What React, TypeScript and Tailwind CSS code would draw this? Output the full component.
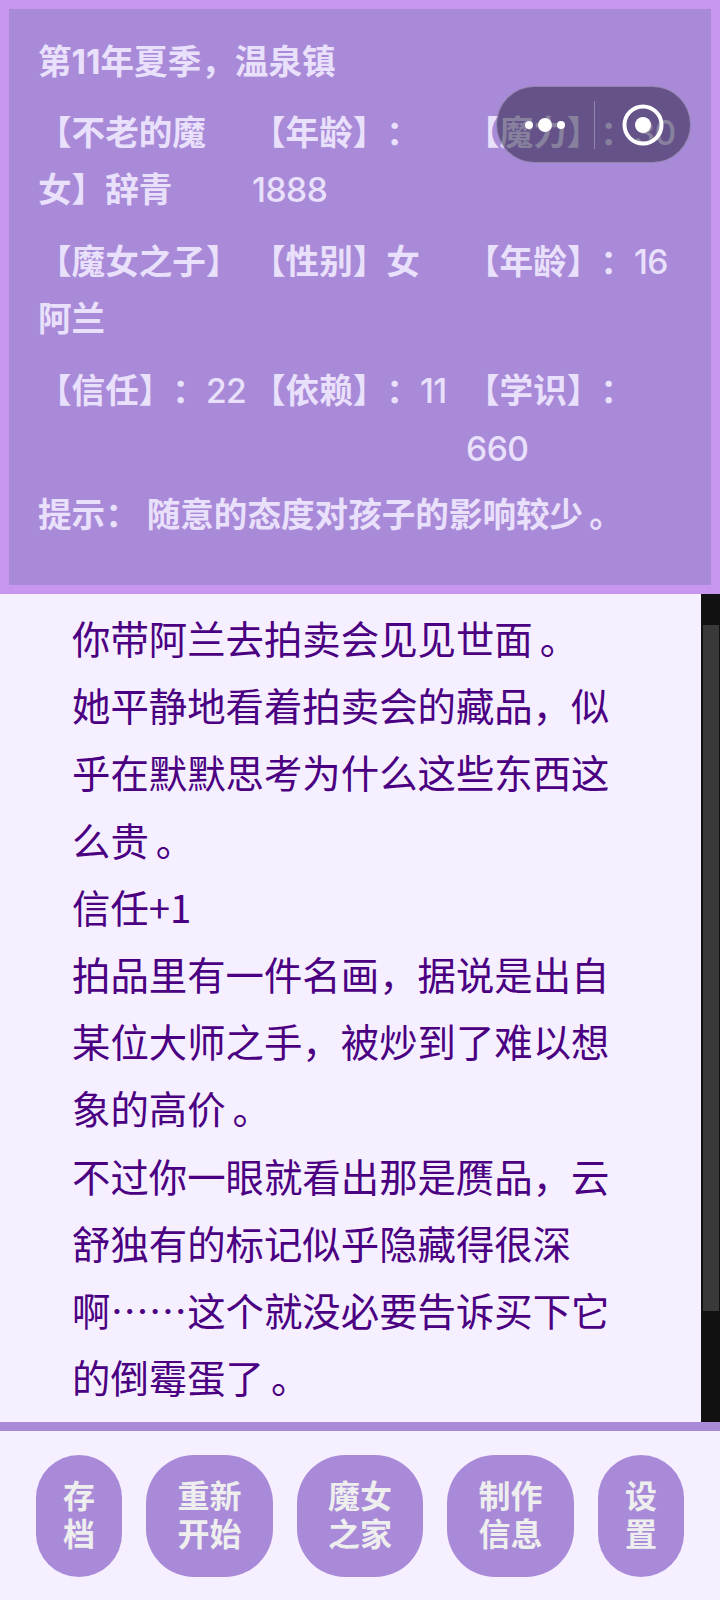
import React from 'react';

const stats = [
  ['【不老的魔女】辞青', '【年龄】：1888', '【魔力】：30'],
  ['【魔女之子】阿兰', '【性别】女', '【年龄】：16'],
  ['【信任】：22', '【依赖】：11', '【学识】：660'],
];

const story = [
  '你带阿兰去拍卖会见见世面。',
  '她平静地看着拍卖会的藏品，似乎在默默思考为什么这些东西这么贵。',
  '信任+1',
  '拍品里有一件名画，据说是出自某位大师之手，被炒到了难以想象的高价。',
  '不过你一眼就看出那是赝品，云舒独有的标记似乎隐藏得很深啊……这个就没必要告诉买下它的倒霉蛋了。',
];

const buttons = [
  { lines: ['存', '档'], width: 'w-[86px]' },
  { lines: ['重新', '开始'], width: 'w-[127px]' },
  { lines: ['魔女', '之家'], width: 'w-[126px]' },
  { lines: ['制作', '信息'], width: 'w-[127px]' },
  { lines: ['设', '置'], width: 'w-[86px]' },
];

// the full stop sits further right in the reference's font
function Sentence({ text, gap }: { text: string; gap: string }) {
  if (!text.endsWith('。')) return <>{text}</>;
  return (
    <>
      {text.slice(0, -1)}
      <span className={gap}>。</span>
    </>
  );
}

// numbers are lighter and tighter than the labels next to them
function StatCell({ text }: { text: string }) {
  return (
    <div>
      {text.split(/(\d+)/).map((part, i) =>
        /\d/.test(part) ? (
          <span key={i} className="font-medium tracking-[-0.5px]">{part}</span>
        ) : (
          <React.Fragment key={i}>{part}</React.Fragment>
        ),
      )}
    </div>
  );
}

function Capsule() {
  return (
    <div className="absolute left-[496px] top-[86px] flex h-[77px] w-[195px] items-center rounded-full border border-white/30 bg-[#100e2a]/45">
      <div className="flex w-[97px] items-center justify-end gap-[5px] pr-[29px]">
        <span className="h-[8px] w-[8px] rounded-full bg-white" />
        <span className="h-[14px] w-[14px] rounded-full bg-white" />
        <span className="h-[8px] w-[8px] rounded-full bg-white" />
      </div>
      <div className="h-[48px] w-px bg-white/30" />
      <div className="flex flex-1 justify-center">
        <svg width="42" height="42" viewBox="0 0 42 42">
          <circle cx="21" cy="21" r="18.5" fill="none" stroke="white" strokeWidth="4" />
          <circle cx="21" cy="21" r="8" fill="white" />
        </svg>
      </div>
    </div>
  );
}

export default function App() {
  return (
    <div className="relative flex h-[1600px] w-[720px] flex-col overflow-hidden bg-[#f5efff] font-['Inter','Noto_Sans_CJK_SC',sans-serif] [text-spacing-trim:space-all]">
      <header className="h-[594px] shrink-0 border-[9px] border-[#c797f0] bg-[#a98ad8] pl-[29px] pr-[31px] pt-[24px] text-[33.6px] leading-[57.6px] text-[#e9e0fb]">
        <p className="mb-[13px] font-bold">第11年夏季，温泉镇</p>
        {stats.map((row, i) => (
          <div key={row[0]} className={`grid grid-cols-3 font-semibold ${i === 2 ? 'mb-[9px]' : 'mb-[14px]'}`}>
            {row.map((cell) => (
              <StatCell key={cell} text={cell} />
            ))}
          </div>
        ))}
        <p className="font-bold">
          <Sentence text="提示： 随意的态度对孩子的影响较少。" gap="ml-[6px]" />
        </p>
      </header>

      <div className="flex h-[828px] shrink-0">
        <main className="flex-1 pl-[72px] pr-[74px] pt-[10px] font-['Noto_Sans_CJK_SC',sans-serif] text-[38.4px] leading-[67.2px] text-[#4b0082]">
          {story.map((line) => (
            <p key={line}>
              <Sentence text={line} gap="ml-[7px]" />
            </p>
          ))}
        </main>
        <div className="w-[19px] bg-[#111111] pt-[31px] pl-[2px] pr-[1px]">
          <div className="h-[686px] bg-[#393939]" />
        </div>
      </div>

      <nav className="flex flex-1 gap-[24px] border-t-[9px] border-[#a98ad8] pl-[36px] pt-[24px]">
        {buttons.map((b) => (
          <button
            key={b.lines[0]}
            className={`flex h-[122px] flex-col items-center justify-center rounded-[48px] bg-[#a98ad8] pb-[6px] font-['Noto_Sans_CJK_SC',sans-serif] text-[32px] font-bold leading-[38px] text-[#eeeeee] ${b.width}`}
          >
            {b.lines.map((l) => (
              <span key={l}>{l}</span>
            ))}
          </button>
        ))}
      </nav>

      <Capsule />
    </div>
  );
}
